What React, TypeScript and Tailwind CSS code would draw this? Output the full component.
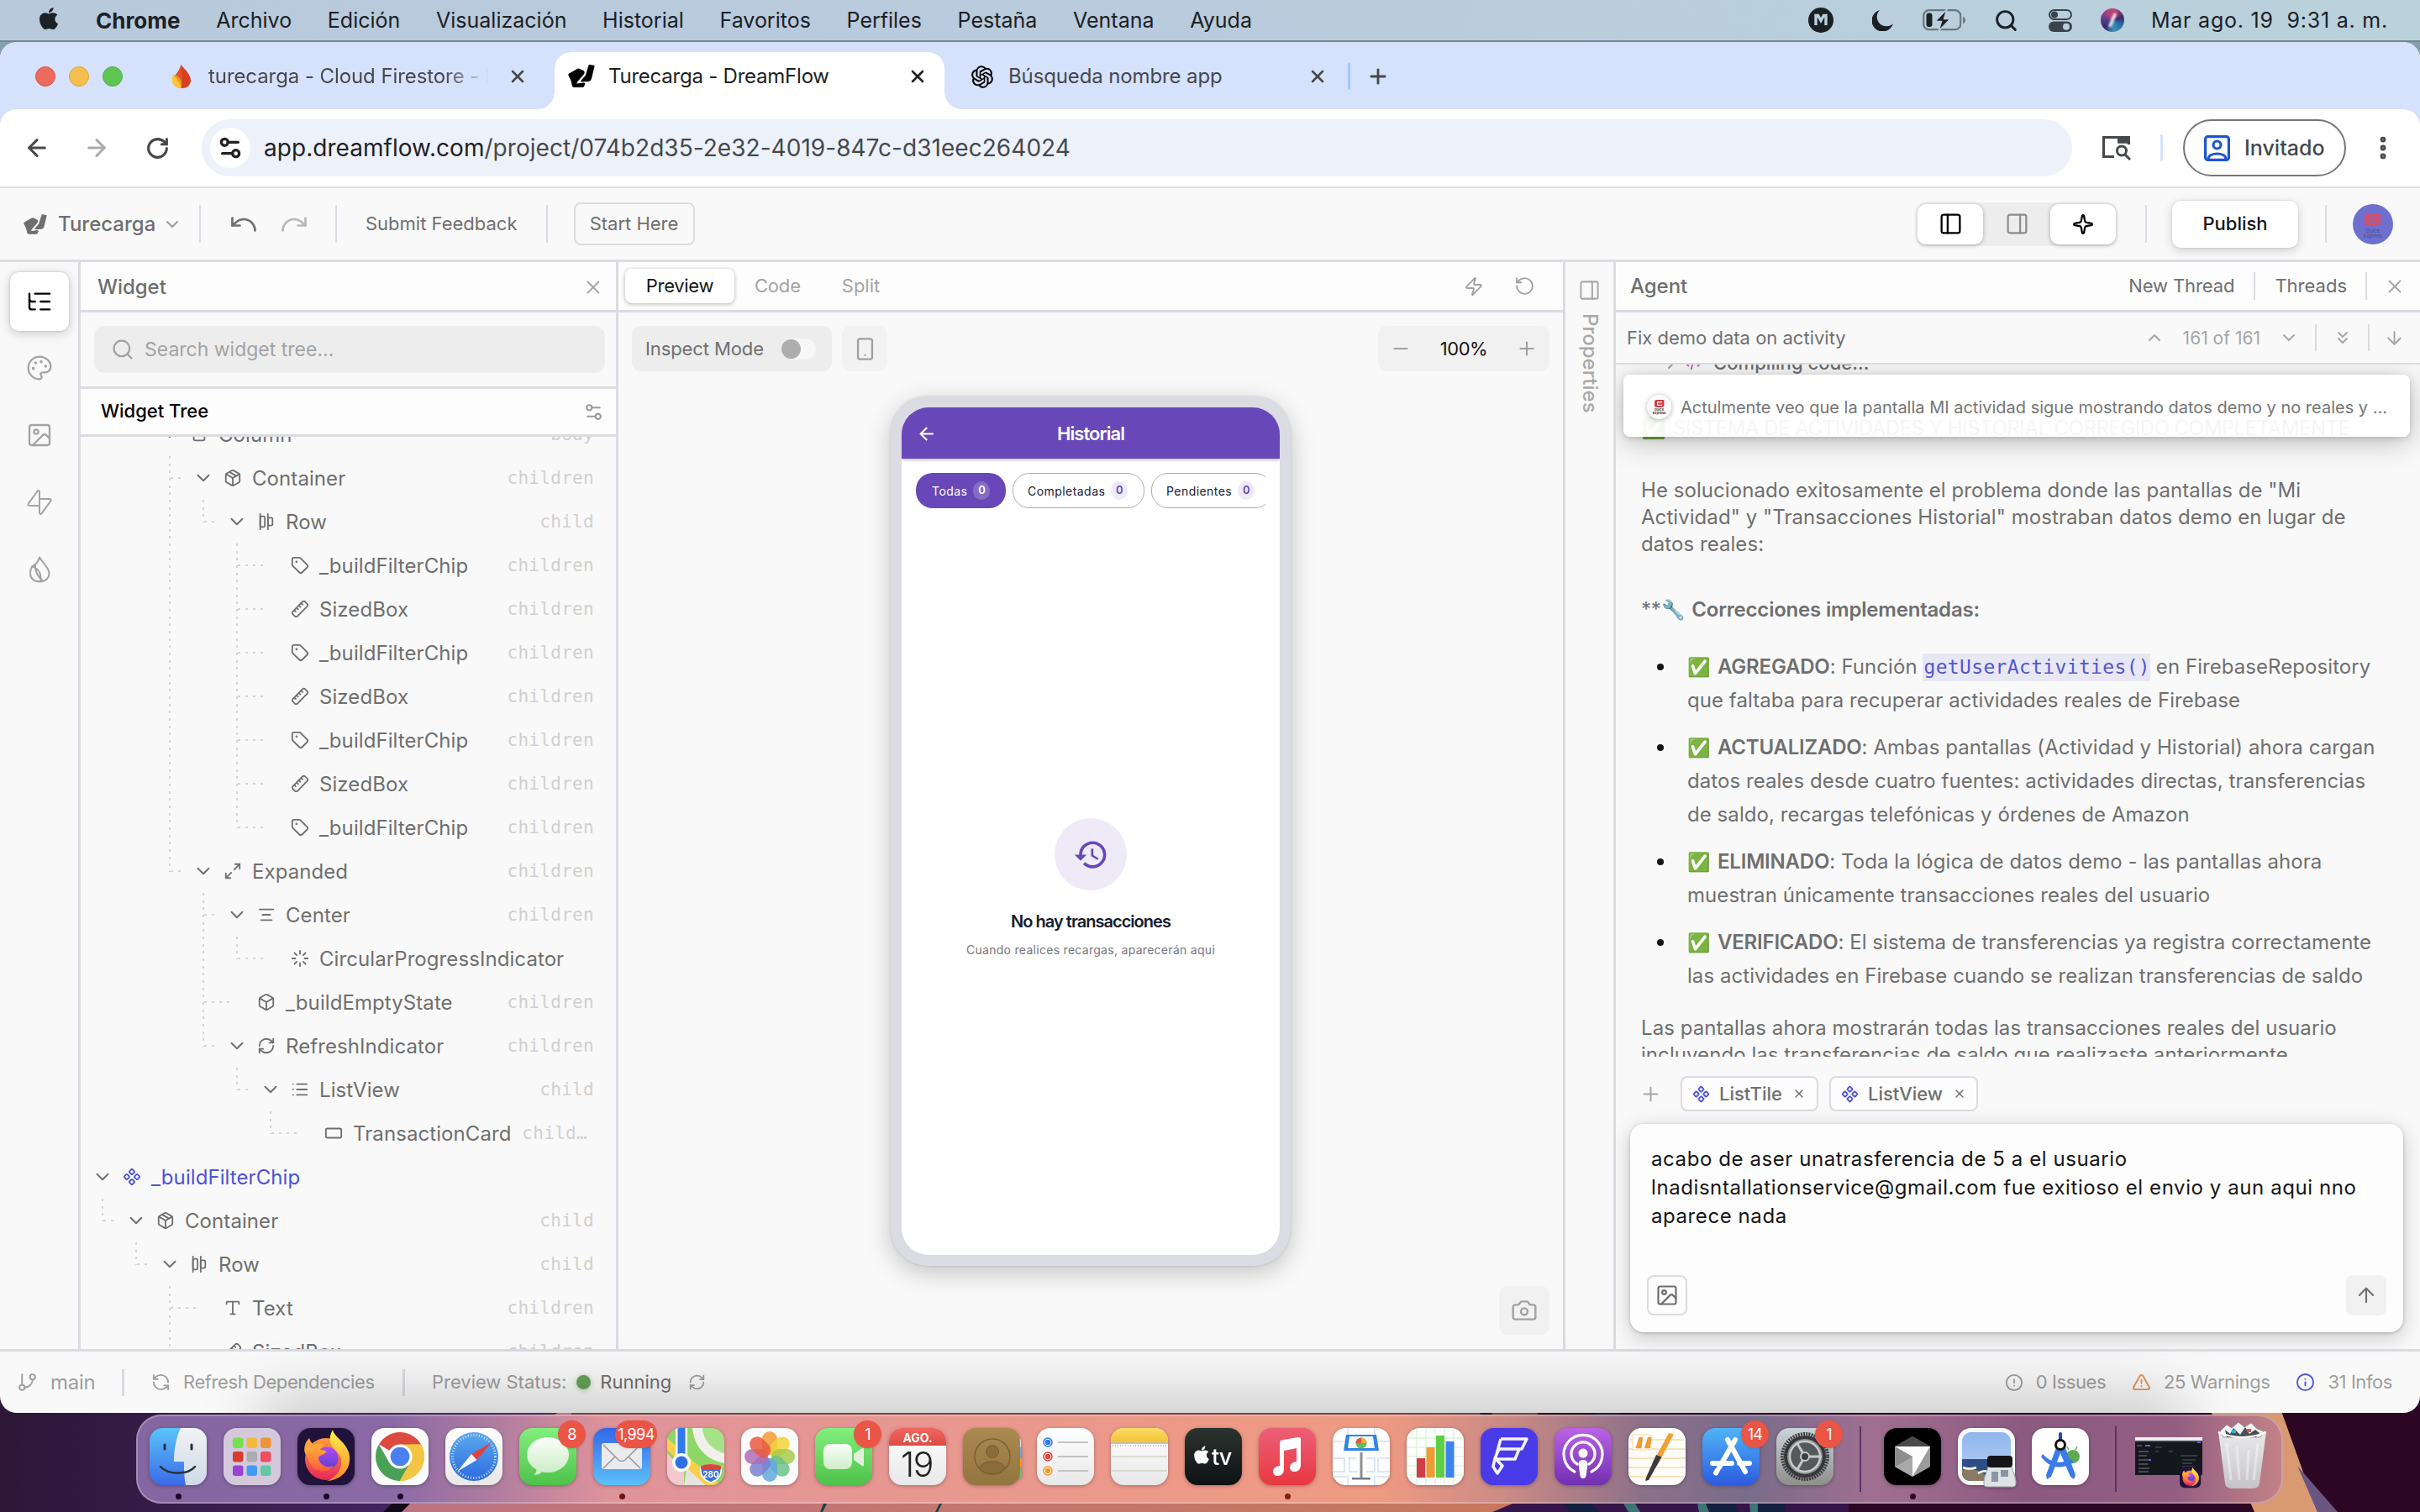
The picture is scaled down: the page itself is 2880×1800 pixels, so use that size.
import type { ReactNode } from 'react';
import {
  AlignCenter, AlignHorizontalDistributeStart, AlignVerticalDistributeStart, ArrowDown, ArrowLeft, ArrowRight, ArrowUp, Box, Camera,
  ChevronDown, ChevronRight, ChevronUp, ChevronsDown, CircleAlert, CodeXml, Component, EllipsisVertical, GitBranch, Image as ImageIcon,
  Info, List, ListTree, Loader, Maximize2, Minus, Package, Palette, PanelLeft, PanelRight, Plus, RectangleHorizontal, Redo, RefreshCcw,
  RefreshCw, RotateCcw, RotateCw, Ruler, Search, Settings2, Smartphone, Sparkle, Tag, TriangleAlert, Type, Undo, X, Zap,
} from 'lucide-react';
import { FaApple } from 'react-icons/fa';
import { AiOutlineOpenAI } from 'react-icons/ai';
import { MdArrowBack, MdHistory } from 'react-icons/md';

/* ---------- Menu bar ---------- */

const MENUS = ['Archivo', 'Edición', 'Visualización', 'Historial', 'Favoritos', 'Perfiles', 'Pestaña', 'Ventana', 'Ayuda'];

function MenuBar() {
  return (
    <header className="flex h-[48px] items-center bg-linear-to-r from-[#b9c9dc] via-[#b9cbdc] to-[#bad2dc] pl-[43px] pr-[38px] text-[25px] text-[#1b2126]">
      <FaApple className="mb-[4px] mr-[41px] size-[30px] shrink-0" />
      <nav className="flex items-center gap-[42.700px] pt-[1px]">
        <span className="text-[26px] font-bold">Chrome</span>
        {MENUS.map((m) => <span key={m}>{m}</span>)}
      </nav>
      <div className="ml-auto flex items-center">
        <svg className="size-[30px]" viewBox="0 0 30 30">
          <circle cx="15" cy="15" r="15" fill="#1b2024" />
          <path d="M9 21V9.500h2.600l3.400 6 3.400-6H21V21" fill="none" stroke="#bdd0dd" strokeWidth="3.400" />
        </svg>
        <svg className="ml-[46px] h-[26px] w-[26px]" viewBox="0 0 26 26">
          <path d="M9 1a11 11 0 0 0 16 16A13 13 0 1 1 9 1Z" fill="#1b2024" />
        </svg>
        <svg className="ml-[34px] h-[26px] w-[52px]" viewBox="0 0 52 26">
          <rect x="1.200" y="1.200" width="44" height="23" rx="6.500" fill="none" stroke="#6b7780" strokeWidth="2.200" />
          <rect x="4.500" y="4.500" width="7" height="16.500" rx="3" fill="#1b2024" />
          <path d="M48 9v8q3-1 3-4t-3-4" fill="#6b7780" />
          <path d="M29 0 15 14.500h7.500L19 26l14-14.500h-7.500z" fill="#1b2024" stroke="#bccedc" strokeWidth="1.500" />
        </svg>
        <Search className="ml-[33px] size-[29px]" strokeWidth={2.400} />
        <svg className="ml-[36px] h-[27px] w-[28px]" viewBox="0 0 28 27">
          <rect x="1" y="1" width="26" height="11" rx="5.500" fill="none" stroke="#3a4349" strokeWidth="2" />
          <circle cx="7" cy="6.500" r="4" fill="#3a4349" />
          <rect x="0" y="14.500" width="28" height="12.500" rx="6.200" fill="#3a4349" />
          <circle cx="21" cy="20.700" r="4" fill="#bccedc" />
        </svg>
        <span className="ml-[34px] flex size-[28px] items-center justify-center rounded-full bg-[conic-gradient(from_20deg,#b24a78,#3c2a66,#2b6fae,#3d8fb4,#312a70,#5a3f90,#b0427c,#b24a78)]">
          <span className="h-[18px] w-[4px] rotate-[25deg] rounded-full bg-white/80 blur-[1px]" />
        </span>
        <span className="ml-[32px] mt-[1px] whitespace-pre tracking-[0.780px]">Mar ago. 19  9:31 a. m.</span>
      </div>
    </header>
  );
}

/* ---------- Browser chrome ---------- */

function DreamLogo({ className }: { className: string }) {
  return (
    <svg className={className} viewBox="0 0 32 27" fill="currentColor">
      <path d="M24.500.600q.300-.700 1.200-.500l5 .700q1 .200.800 1.200L28 16.500q-.600 3-3.600 3.500l-7.400.500q-3 .100-1-2.200l4-4.600q1-1.200 1.400-2.700z" />
      <path d="M1.200 10.500 11 5q1.500-.800 3 0l4 1.800q2.200 1 1.500 3.200-.300 1.200-1.300 2.300L11.500 20q-1.200 1.500-1 2.500L19 21.500l1.500 1-1.200 3Q18.800 27 17 27H7q-1.700 0-2.100-1.700L3.500 19 .600 13q-.700-1.600.600-2.500Z" />
    </svg>
  );
}

function TabStrip() {
  return (
    <div className="flex h-[80px] bg-[#d6e1fb] text-[24px] text-[#45484d]">
      <div className="flex w-[660px] items-center pl-[42px] pt-[2px]">
        <div className="flex gap-4">
          <i className="size-[24px] rounded-full border border-[#d8564b] bg-[#ec6a5e]" />
          <i className="size-[24px] rounded-full border border-[#dba73f] bg-[#f4bf4f]" />
          <i className="size-[24px] rounded-full border border-[#50ad43] bg-[#61c554]" />
        </div>
        <svg className="ml-[56px] h-[28px] w-[28px]" viewBox="0 0 28 28">
          <path d="M13.500 0C17 5 25 11 25 18.500 25 25 20 28 15 28c-4 0-7-1.500-8.500-4.500z" fill="#d5401f" />
          <path d="M13.500 0C12 6 7 11 5 16l8 11 2-13z" fill="#e0522a" />
          <path d="M4 12c6 3 10 8 10 15.800C7 28 3 24 3 18.500 3 16 3.300 14 4 12Z" fill="#ffc43a" />
          <path d="M4.500 12c5 1 8.500 4 9.500 8v7.800C12 22 8.500 17 4.500 12Z" fill="#f59a1c" />
        </svg>
        <span className="ml-[18px] w-[334px] overflow-hidden whitespace-nowrap leading-[36px] tracking-[-0.080px] [mask-image:linear-gradient(to_right,#000_84%,transparent)]">turecarga - Cloud Firestore - Firebase</span>
        <X className="ml-[22px] size-[24px]" strokeWidth={2.600} />
      </div>
      <div className="relative mt-[12px] flex w-[464px] items-center rounded-t-[20px] bg-white pb-[11px] pl-[16px] text-[#1d1f22]">
        <span className="absolute bottom-0 left-[-20px] size-[20px] bg-[radial-gradient(circle_at_0_0,transparent_19.500px,white_20px)]" />
        <span className="absolute bottom-0 right-[-20px] size-[20px] bg-[radial-gradient(circle_at_100%_0,transparent_19.500px,white_20px)]" />
        <DreamLogo className="h-[27px] w-[32px] text-black" />
        <span className="ml-[16px] w-[356px] tracking-[-0.230px]">Turecarga - DreamFlow</span>
        <X className="size-[24px]" strokeWidth={2.600} />
      </div>
      <div className="flex items-center pl-[28px] pt-[1px]">
        <AiOutlineOpenAI className="size-[34px] text-black" />
        <span className="ml-[14px] w-[354px] tracking-[-0.120px]">Búsqueda nombre app</span>
        <X className="ml-[2px] size-[24px]" strokeWidth={2.600} />
        <i className="ml-[24px] h-[32px] w-[3px] rounded bg-[#a8c7fa]" />
        <Plus className="ml-[19px] size-[28px]" strokeWidth={2.400} />
      </div>
    </div>
  );
}

function AddressBar() {
  return (
    <div className="bg-[#d6e1fb]">
      <div className="flex h-[94px] items-center rounded-t-[20px] border-b-2 border-[#dedede] bg-white text-[#45484d]">
        <ArrowLeft className="ml-[28px] size-[32px]" strokeWidth={2.300} />
        <ArrowRight className="ml-[39px] size-[32px] text-[#a9abad]" strokeWidth={2.300} />
        <RotateCw className="ml-[42px] size-[29px]" strokeWidth={2.500} />
        <div className="ml-[38px] flex h-[68px] w-[2226px] items-center rounded-full bg-[#edf1f9] pl-[10px]">
          <span className="flex size-[48px] items-center justify-center rounded-full bg-white">
            <Settings2 className="size-[32px] text-[#222]" strokeWidth={2.500} />
          </span>
          <span className="ml-[16px] text-[28px] tracking-[0.040px] text-[#1f2124]">app.dreamflow.com<span className="text-[#45484d]">/project/074b2d35-2e32-4019-847c-d31eec264024</span></span>
        </div>
        <svg className="ml-[35px] h-[30px] w-[36px]" viewBox="0 0 36 30" fill="none" stroke="#45484d" strokeWidth="3">
          <path d="M15 25.500H2.500v-23h30V11M20 8h12" />
          <path d="M19 2.500h14v7H19z" fill="#45484d" stroke="none" />
          <circle cx="24" cy="18.500" r="5.500" />
          <path d="m28 23 6 6" />
        </svg>
        <i className="ml-[34px] h-[32px] w-[3px] rounded bg-[#d3e3fd]" />
        <div className="ml-[24px] flex h-[68px] w-[194px] items-center rounded-full border-2 border-[#747775] pl-[23px] pt-[2px] text-[25px] font-medium">
          <svg className="mb-[2px] mr-[17px] size-[31px]" viewBox="0 0 31 31" fill="none" stroke="#1f56d0" strokeWidth="3.200">
            <rect x="1.600" y="1.600" width="27.800" height="27.800" rx="3" />
            <circle cx="15.500" cy="11.500" r="4.500" />
            <path d="M5 28c1-8 20-8 21 0" />
          </svg>
          Invitado
        </div>
        <EllipsisVertical className="ml-[27px] size-[34px]" strokeWidth={2.800} />
      </div>
    </div>
  );
}

/* ---------- DreamFlow top bar ---------- */

function Divider({ className }: { className: string }) {
  return <i className={`h-[45px] w-[2px] shrink-0 bg-[#dadae2] ${className}`} />;
}

function AppBar() {
  return (
    <div className="flex h-[88px] items-center border-b-[3px] border-[#dbdbe3] text-[22px] text-[#6f6f6f]">
      <DreamLogo className="ml-[28px] h-[24px] w-[28px]" />
      <span className="ml-[13px] w-[117px] text-[24px] font-medium">Turecarga</span>
      <ChevronDown className="ml-[7px] size-[24px] text-[#9a9a9a]" strokeWidth={2} />
      <Divider className="ml-[20px]" />
      <Undo className="ml-[33px] size-[36px]" strokeWidth={1.800} />
      <Redo className="ml-[24px] size-[36px] text-[#b8b8b8]" strokeWidth={1.800} />
      <Divider className="ml-[31px]" />
      <span className="ml-[34px]">Submit Feedback</span>
      <Divider className="ml-[34px]" />
      <span className="ml-[31px] flex h-[51px] w-[144px] items-center justify-center rounded-[8px] border-2 border-[#dcdcdc]">Start Here</span>
      <div className="ml-auto flex h-[52px] items-center rounded-[10px] bg-[#ededed]">
        <span className="flex h-[48px] w-[78px] items-center justify-center rounded-[10px] bg-white text-black shadow-[0_1px_5px_rgba(0,0,0,.3)]"><PanelLeft className="size-[29px]" strokeWidth={1.900} /></span>
        <span className="flex w-[80px] items-center justify-center text-[#8b8b8b]"><PanelRight className="size-[29px]" strokeWidth={1.800} /></span>
        <span className="flex h-[48px] w-[78px] items-center justify-center rounded-[10px] bg-white text-black shadow-[0_1px_5px_rgba(0,0,0,.3)]"><Sparkle className="size-[26px]" strokeWidth={2.100} /></span>
      </div>
      <Divider className="ml-[35px]" />
      <span className="ml-[30px] flex h-[56px] w-[150px] items-center justify-center rounded-[10px] bg-white font-medium text-[#151515] shadow-[0_3px_12px_rgba(0,0,0,.18),0_0_2px_rgba(0,0,0,.15)]">Publish</span>
      <Divider className="ml-[32px]" />
      <span className="ml-[31px] mr-[32px] flex size-[48px] flex-col items-center justify-center rounded-full bg-[#6e70d0]">
        <svg className="mt-[4px] h-[15px] w-[20px]" viewBox="0 0 20 15"><path d="M0 4Q0 0 4 0h15v11q0 4-4 4H3q-3 0-3-4z" fill="#d2506a" /><path d="M15 4.500H6v6h9" fill="none" stroke="#8f63b6" strokeWidth="2" /></svg>
        <span className="mt-[3px] text-center text-[6px] leading-[6px] text-[#4b4a8c]">Dulce<br />Express</span>
      </span>
    </div>
  );
}

/* ---------- Widget tree ---------- */

function SupabaseMark() {
  return (
    <svg className="size-[32px]" viewBox="0 0 32 32" fill="none" stroke="currentColor" strokeWidth="2" strokeLinejoin="round">
      <path d="M16 20H4q-2.600-.300-1.200-2.600L13.600 2.600Q15.500 1 16 3.200z" />
      <path d="M16 12h12q2.600.300 1.200 2.600L18.400 29.400Q16.500 31 16 28.800z" />
    </svg>
  );
}

function FirebaseMark() {
  return (
    <svg className="h-[32px] w-[28px]" viewBox="0 0 28 32" fill="none" stroke="currentColor" strokeWidth="2" strokeLinejoin="round">
      <path d="M14 1.500C17 7 25.500 14 25.500 20.500c0 6-4.500 10-11.500 10-7 0-11-4.500-11-10 0-3 1-6.500 2-8C9 10.500 13 6 14 1.500Z" />
      <path d="M5 12.500c8 2 12 9 10 18M9 9.500c-1 8 2 14 9.500 20.500" />
    </svg>
  );
}

type IconType = typeof Tag;
type Row = { name: string; slot?: string; guides: string; icon: IconType; leaf?: boolean; accent?: boolean; flip?: boolean };

const chip = (end = false): Row => ({ name: '_buildFilterChip', slot: 'children', guides: end ? '  I L' : '  I T', icon: Tag, leaf: true });
const sized: Row = { name: 'SizedBox', slot: 'children', guides: '  I T', icon: Ruler, leaf: true, flip: true };

const ROWS: Row[] = [
  { name: 'Column', slot: 'body', guides: '  ', icon: AlignVerticalDistributeStart },
  { name: 'Container', slot: 'children', guides: '  T', icon: Package },
  { name: 'Row', slot: 'child', guides: '  IL', icon: AlignHorizontalDistributeStart },
  chip(), sized, chip(), sized, chip(), sized, chip(true),
  { name: 'Expanded', slot: 'children', guides: '  L', icon: Maximize2 },
  { name: 'Center', slot: 'children', guides: '   T', icon: AlignCenter },
  { name: 'CircularProgressIndicator', guides: '   IL', icon: Loader, leaf: true },
  { name: '_buildEmptyState', slot: 'children', guides: '   T', icon: Box, leaf: true },
  { name: 'RefreshIndicator', slot: 'children', guides: '   L', icon: RefreshCw },
  { name: 'ListView', slot: 'child', guides: '    L', icon: List },
  { name: 'TransactionCard', slot: 'child…', guides: '     L', icon: RectangleHorizontal, leaf: true },
  { name: '_buildFilterChip', guides: '', icon: Component, accent: true },
  { name: 'Container', slot: 'child', guides: 'L', icon: Package },
  { name: 'Row', slot: 'child', guides: ' L', icon: AlignHorizontalDistributeStart },
  { name: 'Text', slot: 'children', guides: '  T', icon: Type, leaf: true },
  { name: 'SizedBox', slot: 'children', guides: '  T', icon: Ruler, leaf: true, flip: true },
];

function Guide({ kind, leaf }: { kind: string; leaf?: boolean }) {
  return (
    <span className="flex h-[52px] w-[40px] shrink-0 pl-[19px]">
      {kind !== ' ' && <i className={`w-[2px] shrink-0 bg-[repeating-linear-gradient(to_bottom,#d4d4d4_0_3px,transparent_3px_8.670px)] ${kind === 'L' ? 'h-[27px]' : 'h-full'}`} />}
      {(kind === 'T' || kind === 'L') && <i className={`mt-[25px] h-[2px] shrink-0 bg-[repeating-linear-gradient(to_right,#d4d4d4_0_3px,transparent_3px_9px)] ${leaf ? 'w-[30px]' : 'w-[12px]'}`} />}
    </span>
  );
}

function TreeRow({ row }: { row: Row }) {
  const Icon = row.icon;
  return (
    <div className="flex h-[52px] shrink-0 items-center pl-[6px] pr-[26px] text-[#6f6f6f]">
      {[...row.guides].map((g, i) => <Guide key={i} kind={g} leaf={row.leaf} />)}
      <span className="flex w-[40px] shrink-0 justify-center">{!row.leaf && <ChevronDown className="size-[26px]" strokeWidth={1.800} />}</span>
      <Icon className={`ml-[4px] size-[22px] shrink-0 ${row.accent ? 'text-[#4d52d8]' : ''} ${row.flip ? '-scale-x-100' : ''}`} strokeWidth={2} />
      <span className={`ml-[12px] pt-[1px] text-[24px] tracking-[0.080px] ${row.accent ? 'text-[#4d52d8]' : ''}`}>{row.name}</span>
      <span className={`ml-auto pt-[1px] font-['DejaVu_Sans_Mono',monospace] text-[21px] tracking-[0.300px] text-[#d0d0d0] ${row.name === 'TransactionCard' ? 'pr-[8px]' : ''}`}>{row.slot}</span>
    </div>
  );
}

function Rail() {
  return (
    <div className="flex w-[96px] shrink-0 flex-col items-center border-r-[3px] border-[#dbdbe3] pt-[12px] text-[#a3a3a3]">
      <span className="flex h-[70px] w-[70px] items-center justify-center rounded-[10px] bg-white text-black shadow-[0_3px_14px_rgba(0,0,0,.18),0_0_3px_rgba(0,0,0,.2)]"><ListTree className="size-[32px]" strokeWidth={1.800} /></span>
      <div className="mt-[28px] flex flex-col items-center gap-[48px]">
        <Palette className="size-[32px]" strokeWidth={1.700} />
        <ImageIcon className="size-[32px]" strokeWidth={1.700} />
        <SupabaseMark />
        <FirebaseMark />
      </div>
    </div>
  );
}

function WidgetPanel() {
  return (
    <section className="flex w-[640px] shrink-0 flex-col border-r-[3px] border-[#dbdbe3]">
      <div className="flex h-[60px] shrink-0 items-center justify-between border-b-[3px] border-[#dbdbe3] bg-[#fdfdfd] pl-[20px] pr-[14px] pt-[2px]">
        <span className="text-[24px] font-medium tracking-[-0.050px] text-[#6f6f6f]">Widget</span>
        <X className="size-[26px] text-[#a5a5a5]" strokeWidth={1.700} />
      </div>
      <div className="h-[91px] shrink-0 border-b-[3px] border-[#dbdbe3] px-[16px] pt-[16px]">
        <div className="flex h-[56px] w-[608px] items-center rounded-[12px] bg-[#ededed] pl-[20px] text-[23px] text-[#a3a3a3]">
          <Search className="mr-[12px] size-[28px]" strokeWidth={2} />
          <span className="pt-[1px]">Search widget tree...</span>
        </div>
      </div>
      <div className="flex h-[57px] shrink-0 items-center justify-between border-b-[3px] border-[#dbdbe3] bg-[#fdfdfd] pl-[24px] pr-[14px]">
        <span className="pb-[1px] text-[22px] font-medium text-black">Widget Tree</span>
        <Settings2 className="size-[25px] text-[#9a9a9a]" strokeWidth={2} />
      </div>
      <div className="min-h-0 flex-1 overflow-hidden">
        <div className="mt-[-29px] flex flex-col">
          {ROWS.map((r, i) => <TreeRow key={i} row={r} />)}
        </div>
      </div>
    </section>
  );
}

/* ---------- Preview ---------- */

function Chip({ label, active, className }: { label: string; active?: boolean; className: string }) {
  return (
    <span className={`flex h-[42px] shrink-0 items-center rounded-[20px] text-[14px] tracking-[0.450px] ${active ? 'bg-[#6848b8] pl-[19px] text-white' : 'border border-[#adadad] pl-[17px] text-[#201c30]'} ${className}`}>
      {label}
      <b className={`ml-[7px] flex h-[22px] w-[20px] items-center justify-center rounded-[10px] text-[13px] font-semibold tracking-normal ${active ? 'bg-white/20' : 'bg-[#eeeaf7] text-[#6848b8]'}`}>0</b>
    </span>
  );
}

function Phone() {
  return (
    <div className="flex h-[1035px] w-[476px] rounded-[44px] bg-[#dbdbe3] p-[13px] shadow-[0_8px_30px_rgba(0,0,0,.22),0_0_3px_rgba(0,0,0,.15)]">
      <div className="flex w-full flex-col overflow-hidden rounded-[32px] bg-white">
        <div className="relative z-10 flex h-[61px] shrink-0 items-center justify-center bg-[#6848b8] pt-[1px] text-[22px] font-semibold tracking-[-0.900px] text-white shadow-[0_1px_4px_rgba(0,0,0,.35)]">
          <MdArrowBack className="absolute left-[17px] size-[25px]" />
          Historial
        </div>
        <div className="ml-[17px] mr-[17px] mt-[17px] flex gap-[8px] overflow-hidden">
          <Chip label="Todas" active className="w-[107px]" />
          <Chip label="Completadas" className="w-[157px]" />
          <Chip label="Pendientes" className="w-[144px]" />
        </div>
        <div className="mt-[369px] flex flex-col items-center">
          <span className="flex size-[86px] items-center justify-center rounded-full bg-[#eeeaf7]"><MdHistory className="size-[43px] text-[#6848b8]" /></span>
          <span className="mt-[25px] text-[20px] font-semibold leading-[24px] tracking-[-0.980px] text-[#151c2c]">No hay transacciones</span>
          <span className="mt-[12px] text-[14px] leading-[20px] tracking-[0.290px] text-[#76767e]">Cuando realices recargas, aparecerán aqui</span>
        </div>
      </div>
    </div>
  );
}

function PreviewPanel() {
  return (
    <section className="flex w-[1127px] shrink-0 flex-col border-r-[3px] border-[#dbdbe3]">
      <div className="flex h-[60px] shrink-0 items-center border-b-[3px] border-[#dbdbe3] bg-[#fdfdfd] pl-[8px] text-[22px] text-[#a3a3a3]">
        <span className="flex h-[41px] w-[130px] items-center justify-center rounded-[8px] bg-white tracking-[-0.300px] text-[#151515] shadow-[0_1px_5px_rgba(0,0,0,.3)]">Preview</span>
        <span className="ml-[24px] tracking-[-0.200px]">Code</span>
        <span className="ml-[49px]">Split</span>
        <Zap className="ml-auto size-[24px]" strokeWidth={1.900} />
        <RotateCcw className="ml-[36px] mr-[33px] size-[25px]" strokeWidth={1.900} />
      </div>
      <div className="flex h-[70px] shrink-0 items-end pl-[16px] pr-[16px] text-[22px] text-[#6f6f6f]">
        <div className="flex h-[54px] w-[238px] items-center rounded-[10px] bg-[#ededed] pl-[16px] tracking-[-0.100px]">
          Inspect Mode
          <span className="ml-[21px] flex h-[25px] w-[41px] items-center rounded-full bg-[#f7f7f7]"><i className="size-[23px] rounded-full bg-[#adadad]" /></span>
        </div>
        <span className="ml-[12px] flex h-[54px] w-[54px] items-center justify-center rounded-[10px] bg-[#f2f2f2]"><Smartphone className="size-[29px] text-[#a0a0a0]" strokeWidth={1.900} /></span>
        <div className="ml-auto flex h-[54px] w-[204px] items-center justify-between rounded-[10px] bg-[#f1f1f1] px-[14px] text-[#a0a0a0]">
          <Minus className="size-[26px]" strokeWidth={1.900} />
          <span className="text-[22px] tracking-[-0.500px] text-[#151515]">100%</span>
          <Plus className="size-[26px]" strokeWidth={1.900} />
        </div>
      </div>
      <div className="flex justify-center pt-[30px]"><Phone /></div>
      <div className="flex justify-end pr-[16px] pt-[24px]">
        <span className="flex h-[58px] w-[60px] items-center justify-center rounded-[10px] bg-[#f1f1f1]"><Camera className="size-[32px] text-[#a0a0a0]" strokeWidth={1.800} /></span>
      </div>
    </section>
  );
}

/* ---------- Agent ---------- */

function Bullet({ title, children }: { title: string; children: ReactNode }) {
  return (
    <li className="flex">
      <i className="ml-[19px] mr-[28px] mt-[16px] size-[8px] shrink-0 rounded-full bg-[#151515]" />
      <p className="whitespace-nowrap leading-[40px]"><span className="mr-[7px] inline-block w-[29px] text-[22px] leading-[30px]">✅</span><b className="font-semibold tracking-[-0.200px]">{title}</b>: {children}</p>
    </li>
  );
}

function ContextChip({ label, className }: { label: string; className: string }) {
  return (
    <span className={`flex h-[42px] items-center rounded-[8px] border-2 border-[#dbdbe3] bg-[#fdfdfd] pl-[12px] font-medium text-[#6f6f6f] ${className}`}>
      <Component className="mr-[11px] size-[21px] text-[#5156d8]" strokeWidth={2.200} />
      {label}
      <X className="ml-[12px] size-[16px]" strokeWidth={2.200} />
    </span>
  );
}

function AgentPanel() {
  return (
    <section className="flex min-w-0 flex-1 flex-col text-[22px] text-[#6f6f6f]">
      <div className="flex h-[60px] shrink-0 items-center border-b-[3px] border-[#dbdbe3] bg-[#fdfdfd] pl-[17px] pr-[17px]">
        <span className="text-[24px] font-medium tracking-[-0.050px]">Agent</span>
        <span className="ml-auto tracking-[-0.100px]">New Thread</span>
        <i className="ml-[23px] mr-[23px] h-[33px] w-[2px] bg-[#dadae2]" />
        <span>Threads</span>
        <i className="ml-[22px] mr-[20px] h-[33px] w-[2px] bg-[#dadae2]" />
        <X className="size-[26px] text-[#a5a5a5]" strokeWidth={1.700} />
      </div>
      <div className="flex h-[62px] shrink-0 items-center border-b-2 border-[#dbdbe3] pl-[13px] pr-[18px] text-[#a5a5a5]">
        <span className="text-[#6f6f6f]">Fix demo data on activity</span>
        <ChevronUp className="ml-auto size-[24px]" strokeWidth={2} />
        <span className="ml-[22px] pt-[2px] text-[21px]">161 of 161</span>
        <ChevronDown className="ml-[22px] size-[24px]" strokeWidth={2} />
        <i className="ml-[19px] mr-[19px] h-[32px] w-[2px] bg-[#dadae2]" />
        <ChevronsDown className="size-[24px]" strokeWidth={1.800} />
        <i className="ml-[18px] mr-[17px] h-[32px] w-[2px] bg-[#dadae2]" />
        <ArrowDown className="size-[25px]" strokeWidth={1.900} />
      </div>
      <div className="relative h-[824px] shrink-0 overflow-hidden text-[24px] tracking-[0.060px]">
        <div className="mt-[-18px] flex flex-col pl-[30px] leading-[32px]">
          <div className="flex items-center pl-[24px] text-[22px] font-medium">
            <ChevronRight className="size-[24px] text-[#9a9a9a]" strokeWidth={2} />
            <CodeXml className="ml-[3px] mr-[13px] size-[22px] text-[#c05ab4]" strokeWidth={2} />
            Compiling code...
          </div>
          <div className="mt-[46px] h-[32px] whitespace-nowrap"><span className="inline-block w-[38px]">✅</span><span className="tracking-[-0.480px]">SISTEMA DE ACTIVIDADES Y HISTORIAL CORREGIDO COMPLETAMENTE</span></div>
          <p className="mt-[42px]">
            He solucionado exitosamente el problema donde las pantallas de "Mi<br />
            Actividad" y "Transacciones Historial" mostraban datos demo en lugar de<br />
            datos reales:
          </p>
          <p className="mt-[46px] h-[32px] font-semibold tracking-[-0.200px]"><span className="font-normal">**</span><span className="mr-[2px] text-[23px]">🔧</span> Correcciones implementadas:</p>
          <ul className="mt-[32px] flex flex-col gap-4">
            <Bullet title="AGREGADO">Función <code className="inline-block bg-[#e8e7f4] pl-[1px] font-['DejaVu_Sans_Mono',monospace] text-[23px] leading-[33px] tracking-[0.340px] text-[#5257d0]">getUserActivities()</code> en FirebaseRepository<br />que faltaba para recuperar actividades reales de Firebase</Bullet>
            <Bullet title="ACTUALIZADO">Ambas pantallas (Actividad y Historial) ahora cargan<br />datos reales desde cuatro fuentes: actividades directas, transferencias<br />de saldo, recargas telefónicas y órdenes de Amazon</Bullet>
            <Bullet title="ELIMINADO">Toda la lógica de datos demo - las pantallas ahora<br />muestran únicamente transacciones reales del usuario</Bullet>
            <Bullet title="VERIFICADO">El sistema de transferencias ya registra correctamente<br />las actividades en Firebase cuando se realizan transferencias de saldo</Bullet>
          </ul>
          <p className="mt-[26px]">
            Las pantallas ahora mostrarán todas las transacciones reales del usuario<br />
            incluyendo las transferencias de saldo que realizaste anteriormente
          </p>
        </div>
        <div className="absolute left-[9px] top-[12px] flex h-[74px] w-[936px] items-center rounded-[8px] bg-white/93 pl-[28px] pt-[3px] text-[20px] tracking-normal text-[#757575] shadow-[0_6px_34px_rgba(0,0,0,.25),0_2px_6px_rgba(0,0,0,.15)]">
          <span className="mr-[11px] flex size-[29px] shrink-0 flex-col items-center justify-center rounded-full bg-[#fbfbfb] shadow-[0_1px_6px_rgba(0,0,0,.3)]">
            <svg className="h-[9px] w-[12px]" viewBox="0 0 20 15"><path d="M0 4Q0 0 4 0h15v11q0 4-4 4H3q-3 0-3-4z" fill="#d23c44" /><path d="M15 4.500H6v6h9" fill="none" stroke="#fff" strokeWidth="2" /></svg>
            <span className="mt-[1px] text-center text-[4px] font-bold leading-[4px] text-[#444]">Dulce<br />Express</span>
          </span>
          <span className="whitespace-nowrap">Actulmente veo que la pantalla MI actividad sigue mostrando datos demo y no reales y ...</span>
        </div>
      </div>
      <div className="mt-[23px] flex shrink-0 items-center pl-[28px]">
        <Plus className="mr-[22px] size-[27px] text-[#a5a5a5]" strokeWidth={1.800} />
        <ContextChip label="ListTile" className="w-[164px]" />
        <ContextChip label="ListView" className="ml-[13px] w-[177px]" />
      </div>
      <div className="ml-[17px] mt-[15px] flex h-[248px] w-[920px] shrink-0 flex-col rounded-[16px] bg-[#fdfdfd] shadow-[0_6px_24px_rgba(0,0,0,.2),0_1px_4px_rgba(0,0,0,.2)]">
        <p className="ml-[25px] mt-[25px] whitespace-nowrap text-[24px] leading-[34px] tracking-[0.580px] text-[#151515]">
          acabo de aser unatrasferencia de 5 a el usuario<br />
          lnadisntallationservice@gmail.com fue exitioso el envio y aun aqui nno<br />
          aparece nada
        </p>
        <div className="mb-[20px] mt-auto flex justify-between px-[20px]">
          <span className="flex size-[48px] items-center justify-center rounded-[8px] border-2 border-[#dcdcdc]"><ImageIcon className="size-[28px]" strokeWidth={1.900} /></span>
          <span className="flex size-[48px] items-center justify-center rounded-[8px] bg-[#f1f1f1]"><ArrowUp className="size-[28px]" strokeWidth={1.800} /></span>
        </div>
      </div>
    </section>
  );
}

/* ---------- Status bar ---------- */

function StatusBar() {
  return (
    <div className="relative flex h-[76px] shrink-0 items-center border-t-[3px] border-[#dbdbe3] pl-[20px] pr-[33px] text-[22px] tracking-[-0.420px] text-[#9e9e9e]">
      <div className="absolute bottom-[-40px] left-[330px] right-[300px] h-[38px] shadow-[0_0_76px_18px_rgba(0,0,0,.22)]" />
      <GitBranch className="size-[25px]" strokeWidth={1.900} />
      <span className="ml-[15px] w-[54px] text-[24px] tracking-[-0.300px]">main</span>
      <i className="ml-[31px] h-[32px] w-[3px] bg-[#dbdbe3]" />
      <RefreshCcw className="ml-[32px] size-[23px]" strokeWidth={2} />
      <span className="ml-[15px] w-[228px] whitespace-nowrap">Refresh Dependencies</span>
      <i className="ml-[33px] h-[32px] w-[3px] bg-[#dbdbe3]" />
      <span className="ml-[32px] tracking-[-0.020px]">Preview Status:</span>
      <i className="ml-[12px] size-[17px] rounded-full bg-[#66a057] shadow-[0_1px_6px_rgba(90,170,80,.5)]" />
      <span className="ml-[11px] tracking-normal text-[#6f6f6f]">Running</span>
      <RefreshCw className="ml-[20px] size-[21px]" strokeWidth={2} />
      <CircleAlert className="ml-auto size-[22px]" strokeWidth={2} />
      <span className="ml-[15px]">0 Issues</span>
      <TriangleAlert className="ml-[31px] size-[23px] text-[#e19457]" strokeWidth={2} />
      <span className="ml-[15px]">25 Warnings</span>
      <Info className="ml-[31px] size-[23px] text-[#5257d8]" strokeWidth={2} />
      <span className="ml-[15px]">31 Infos</span>
    </div>
  );
}

/* ---------- Dock ---------- */

function Tile({ children, badge, dot, wide }: { children: ReactNode; badge?: string; dot?: string; wide?: boolean }) {
  return (
    <div className="relative flex h-[106px] w-[68px] shrink-0 flex-col items-center pt-[16px]">
      <svg className="size-[68px] overflow-visible drop-shadow-[0_1px_2px_rgba(0,0,0,.3)]" viewBox="0 0 68 68">{children}</svg>
      {dot && <i className={`mt-[10px] size-[7px] rounded-full ${dot}`} />}
      {badge && <b className={`absolute top-[7px] flex h-[33px] items-center justify-center rounded-full bg-[#ea5545] text-[18px] font-normal tracking-[-0.600px] text-white shadow ${wide ? 'left-[26px] w-[50px]' : 'left-[46px] w-[33px]'}`}>{badge}</b>}
    </div>
  );
}

function Plate({ fill }: { fill: string }) {
  return <rect width="68" height="68" rx="15.500" fill={fill} />;
}

function FirefoxArt() {
  return (
    <>
      <circle cx="34" cy="37" r="25" fill="url(#ffBody)" />
      <path d="M42 2c1 8 15 14 19 27 5 16-6 33-26 34 14-5 20-18 16-29C47 25 32 20 42 2Z" fill="url(#ffFlame)" />
      <path d="M9 30c-2-6 0-13 5-18 1 3 3 6 5 8 4-2 9-2 13 0-3 2-5 5-5 8-8 3-13 3-18 2Z" fill="#ffa53a" />
      <circle cx="35" cy="36" r="13.500" fill="url(#ffGlobe)" />
      <path d="M9 30c8-6 18-6 26-2-3 4-8 4-10 7 0 8 10 14 18 10-6 9-22 8-27-1-2-4-4-8-7-14Z" fill="url(#ffTail)" />
    </>
  );
}

const PETALS = ['#f29a34', '#f0d33c', '#a8c94c', '#6cc28b', '#62a9dd', '#7c7fd0', '#b06cb4', '#e9593f'];

function Grad({ id, a, b }: { id: string; a: string; b: string }) {
  return <linearGradient id={id} x1="0" y1="0" x2="0" y2="1"><stop stopColor={a} /><stop offset="1" stopColor={b} /></linearGradient>;
}

function Defs() {
  return (
    <svg className="absolute size-0">
      <defs>
        <Grad id="finder" a="#5bc4fa" b="#3a6ae8" /><Grad id="finderR" a="#f2f2f5" b="#cfd9e6" /><Grad id="green" a="#82ef7e" b="#4fc24a" />
        <Grad id="mail" a="#3467e8" b="#5cc0fb" /><Grad id="paper" a="#ffffff" b="#e8e8e8" /><Grad id="tan" a="#ab8a50" b="#94743f" /><Grad id="dark" a="#2b3430" b="#0d1112" />
        <Grad id="music" a="#ec5f76" b="#e83842" /><Grad id="pod" a="#bb63e6" b="#7030b0" /><Grad id="store" a="#50b4f5" b="#2b5be0" /><Grad id="gray" a="#c9d4da" b="#8f8f8b" />
        <Grad id="needle" a="#5aa9ee" b="#2d6be0" /><Grad id="ffBody" a="#ff9a3a" b="#e6285c" /><Grad id="ffFlame" a="#fff04a" b="#ff8a2c" /><Grad id="ffGlobe" a="#b04cf0" b="#5a3fd0" />
        <Grad id="ffTail" a="#ffa53a" b="#ff5a3c" /><Grad id="notes" a="#fbdc68" b="#f4c431" /><Grad id="cal" a="#f0675f" b="#dd4b45" /><Grad id="bin" a="#e9e9ea" b="#c5c3c6" /><Grad id="sky" a="#8fb6ec" b="#b7d2f4" />
        <Grad id="bubble" a="#fbfdfb" b="#cdeec6" />
      </defs>
    </svg>
  );
}

const LAUNCH = ['#74e04e', '#f4b93c', '#ee9434', '#d63a30', '#a9acb0', '#ee4d60', '#9a44d4', '#3f9df5', '#62c9a4'];

function Dock() {
  return (
    <div className="relative ml-[162px] mt-[2px] flex h-[106px] w-[2555px] rounded-[30px] bg-[linear-gradient(to_right,#8466a0_0,#8b6aa6_12%,#b27e9f_17%,#df939b_22%,#e9988f_38%,#ef9a82_58%,#c98a86_64%,#8e7189_70%,#796c8b_75%,#a06f90_81%,#8c5a80_88%,#935e82_95%,#c38286_100%)] pl-[16px] shadow-[inset_0_0_0_2px_rgba(255,255,255,.25)]">
      <div className="flex gap-[20px]">
        <Tile dot="bg-[#1a0528]">
          <Plate fill="url(#finder)" />
          <path d="M37 0h15.500A15.500 15.500 0 0 1 68 15.500v37A15.500 15.500 0 0 1 52.500 68H43c-2-9-2-18-2-28H29C29 25 32 10 37 0Z" fill="url(#finderR)" />
          <path d="M18 20v5M50 20v5" stroke="#26303c" strokeWidth="3" strokeLinecap="round" />
          <path d="M13 46c9 10 33 10 41 0" fill="none" stroke="#26303c" strokeWidth="2.500" strokeLinecap="round" />
        </Tile>
        <Tile>
          <Plate fill="#d4c9dc" />
          {LAUNCH.map((c, i) => <rect key={i} x={11 + (i % 3) * 16.5} y={11.5 + Math.floor(i / 3) * 16.5} width="12.500" height="12.500" rx="3" fill={c} />)}
        </Tile>
        <Tile dot="bg-[#1a0528]"><Plate fill="#20123a" /><FirefoxArt /></Tile>
        <Tile dot="bg-[#1a0528]">
          <Plate fill="#fbfbfb" />
          <g transform="translate(34 34)">
            <path d="M0 0 -25.100-14.500A29 29 0 0 1 25.100-14.500Z" fill="#dd4b3e" />
            <path d="M-25.100-14.500A29 29 0 0 0 0 29L12.500 7.500-12.500 7.500Z" fill="#4ba058" />
            <path d="M25.100-14.500A29 29 0 0 1 0 29L13 6.500V-14.500Z" fill="#f4c443" />
            <path d="M0-14.500h25.100A29 29 0 0 1 0 29L12.500 7Z" fill="#f4c443" />
            <circle r="14.500" fill="#fff" /><circle r="11.300" fill="#4a80ee" />
          </g>
        </Tile>
        <Tile>
          <Plate fill="url(#paper)" />
          <circle cx="34" cy="34" r="29" fill="url(#needle)" />
          <circle cx="34" cy="34" r="25.500" fill="none" stroke="#cfe4fb" strokeWidth="3" strokeDasharray="1 2.300" />
          <path d="M55 17 37.500 38 31 31Z" fill="#e0403c" /><path d="M14 52 31 31l6.500 7Z" fill="#f2f4f6" />
        </Tile>
        <Tile badge="8">
          <Plate fill="url(#green)" />
          <path d="M20 47c1 4 0 7-3 9 6 0 10-3 12-6" fill="#cdeec6" /><ellipse cx="34" cy="32" rx="25" ry="21" fill="url(#bubble)" />
        </Tile>
        <Tile badge="1,994" wide dot="bg-[#6f1414]">
          <Plate fill="url(#mail)" />
          <rect x="10" y="18" width="48" height="31" rx="3" fill="#ebebee" />
          <path d="m12 20 18 18q4 3 8 0l18-18M12 48l14-14m30 14L42 34" fill="none" stroke="#98989c" strokeWidth="1.500" />
        </Tile>
        <Tile>
          <clipPath id="mapClip"><rect width="68" height="68" rx="15.500" /></clipPath>
          <g clipPath="url(#mapClip)">
            <rect width="68" height="68" fill="#8ed767" />
            <path d="M0 30l20 22v16H0z" fill="#f3c9d0" />
            <path d="M24 44 50 68H20z" fill="#e6e4de" />
            <path d="M30 0h12c2 16 12 26 26 30v12C46 38 32 22 30 0Z" fill="#f2f0ea" />
            <path d="M42 0h26v30C54 26 44 16 42 0Z" fill="#a6e287" />
            <path d="M0 12 68 72H50L0 26Z" fill="#f8d04c" />
            <path d="M10 0h14v34H10z" fill="#fff" /><path d="M12.500 0h9v40h-9z" fill="#2f79e8" />
            <circle cx="17" cy="41" r="11" fill="#fff" /><circle cx="17" cy="41" r="7.500" fill="#2f6fe6" />
          </g>
          <path d="M40 46q12-4 24 0 2 14-12 19Q38 60 40 46Z" fill="#3b74d8" stroke="#fff" strokeWidth="1.500" /><path d="M40 49v-4q12-4 24 0v4z" fill="#d9473c" />
          <text x="52" y="59" fontSize="10" fontWeight="700" fill="#fff" textAnchor="middle">280</text>
        </Tile>
        <Tile>
          <Plate fill="#fbfbfb" />
          {PETALS.map((c, i) => <rect key={c} x="25" y="4" width="18" height="28" rx="9" fill={c} opacity=".85" transform={`rotate(${i * 45} 34 34)`} />)}
        </Tile>
        <Tile badge="1">
          <Plate fill="url(#green)" />
          <rect x="10" y="19" width="34" height="30" rx="8" fill="url(#bubble)" /><path d="m46 31 10-7q2-1 2 1v19q0 2-2 1l-10-7z" fill="#e0f2dc" />
        </Tile>
        <Tile>
          <Plate fill="url(#paper)" />
          <path d="M0 21v-5.500A15.500 15.500 0 0 1 15.500 0h37A15.500 15.500 0 0 1 68 15.500V21z" fill="url(#cal)" />
          <text x="34" y="16.500" fontSize="14" fontWeight="700" fill="#fff" textAnchor="middle">AGO.</text>
          <text x="33" y="58" fontSize="41" fontWeight="300" fill="#222" textAnchor="middle" letterSpacing="-1.500">19</text>
        </Tile>
        <Tile>
          <path d="M60 12h6q3 0 3 3v8h-6z" fill="#dedede" /><path d="M60 23h10v12H60z" fill="#58a8e0" /><path d="M60 36h10v11H60z" fill="#ef9534" /><path d="M60 48h10v8q0 4-5 4h-5z" fill="#5fc85a" />
          <Plate fill="url(#tan)" />
          <circle cx="35" cy="34" r="21" fill="none" stroke="#7b6034" strokeWidth="1.500" /><circle cx="35" cy="28" r="7.500" fill="#8a6c3b" stroke="#765b30" /><path d="M20 48c3-11 27-11 30 0-7 9-23 9-30 0Z" fill="#8a6c3b" stroke="#765b30" />
        </Tile>
        <Tile>
          <Plate fill="url(#paper)" />
          {['#2f78ee', '#e5483f', '#ee9a2e'].map((c, i) => (
            <g key={c}><circle cx="13" cy={17 + i * 17} r="5" fill="#fff" stroke={c} strokeWidth="1.500" /><circle cx="13" cy={17 + i * 17} r="3.300" fill={c} /><path d={`M25 ${17 + i * 17}h36`} stroke="#c3c3c6" strokeWidth="1.800" /></g>
          ))}
        </Tile>
        <Tile>
          <Plate fill="url(#paper)" />
          <path d="M0 17v-1.500A15.500 15.500 0 0 1 15.500 0h37A15.500 15.500 0 0 1 68 15.500V17z" fill="url(#notes)" />
          <path d="M0 18h68" stroke="#8f8a78" strokeWidth="1.200" /><path d="M2 21h64" stroke="#b5b5b5" strokeWidth="1.500" strokeDasharray="1 2" /><path d="M1 34h66M1 51h66" stroke="#d3d2cc" strokeWidth="1.500" />
        </Tile>
        <Tile>
          <Plate fill="url(#dark)" />
          <g transform="translate(8 20)"><FaApple size={24} color="#fff" /></g>
          <text x="32" y="44" fontSize="27" fontWeight="500" fill="#fff" letterSpacing="-1">tv</text>
        </Tile>
        <Tile dot="bg-[#7b1f10]">
          <Plate fill="url(#music)" />
          <path d="M25 18q0-3 3-3.700L47 11q3-.500 3 2v31q0 7-7 8-6 0-6-5 0-6 8-7V24l-15 3v22q0 7-7 8-6 0-6-5 0-6 8-7z" fill="#fff" />
        </Tile>
        <Tile>
          <Plate fill="#fdfdfd" />
          <path d="M0 16h16M52 16h16M18 36h10M0 36h14v16H0M20 36v16h10M54 36h14M54 36v16h14M40 36h10v16H40M18 0v12M50 0v8M18 56v12M50 56v12M0 58h16M52 58h16" fill="none" stroke="#d0dff2" strokeWidth="1.500" />
          <path d="M16 8h36l3 19H13z" fill="#2f84e8" /><path d="M20 10h28l2 14H18z" fill="#f7fafd" /><circle cx="34" cy="18" r="6.500" fill="#5bbf52" /><path d="M34 18V11.500a6.500 6.500 0 0 1 6.500 6.500z" fill="#f2b233" /><path d="M34 18v-6.500a6.500 6.500 0 0 0-6.500 6.500z" fill="#e2564a" />
          <path d="M32.500 29h3v30h-3z" fill="#8b9198" /><path d="M23 59h22v2.500H23z" fill="#777d84" />
        </Tile>
        <Tile>
          <Plate fill="#fcfefb" />
          <path d="M0 12h68M0 23h68M0 34h68M0 45h68M0 56h68M12 0v68M23 0v68M34 0v68M45 0v68M56 0v68" stroke="#d3efcf" strokeWidth="1" />
          <path d="M12 36h10v23H12z" fill="#d23d49" /><path d="M23.500 23h10v36h-10z" fill="#ef9a35" /><path d="M35 9h10v50H35z" fill="#5fce47" /><path d="M46.500 16h10v43h-10z" fill="#3f82ee" />
        </Tile>
        <Tile>
          <Plate fill="#4a3be8" />
          <path d="M24 13h31l-6 12H22l-5 11M24 13l-6 22M22 25h24l-5 12H18M17 36l9 9-6 9-5-8z" fill="none" stroke="#f4f3ff" strokeWidth="3.500" strokeLinejoin="round" />
        </Tile>
        <Tile>
          <Plate fill="url(#pod)" />
          <path d="M24 52a23 23 0 1 1 20 0M27 43a14 14 0 1 1 14 0" fill="none" stroke="#fff" strokeWidth="3.200" strokeLinecap="round" /><circle cx="34" cy="30" r="5.500" fill="#fff" /><path d="M28.500 43q0-5 5.500-5t5.500 5L37.500 57q-.500 3-3.500 3t-3.500-3z" fill="#fff" />
        </Tile>
        <Tile>
          <Plate fill="#fefdf9" />
          <path d="M2 14h64M0 25h68M0 36h68M0 47h68M2 58h64" stroke="#f7d9a2" strokeWidth="1.500" />
          <path d="M5 8h22v18H5z" fill="#fff" stroke="#f7d9a2" /><text x="5" y="42" fontSize="42" fontWeight="800" fill="#ee9a35">“</text>
          <path d="m48 6 6 1.500L34 45l-6-2z" fill="#f0a036" /><path d="m33 32 6.500 2.500L24 62l-4 1 1-4z" fill="#3a3a3c" />
        </Tile>
        <Tile badge="14">
          <Plate fill="url(#store)" />
          <path d="M39 14 20 47M30 14l21 38M12 42h23M44 42h12M18 50l-2 3.500" fill="none" stroke="#fff" strokeWidth="6" strokeLinecap="round" />
        </Tile>
        <Tile badge="1">
          <Plate fill="url(#gray)" />
          <circle cx="34" cy="34" r="27" fill="none" stroke="#3a3c3e" strokeWidth="4" strokeDasharray="2 1.200" /><circle cx="34" cy="34" r="23" fill="#8d9193" stroke="#35373a" strokeWidth="4" />
          <circle cx="34" cy="34" r="18" fill="#55595c" stroke="#c7c9ca" strokeWidth="2.500" /><path d="M34 34h20M34 34 24 17M34 34 24 51" stroke="#c7c9ca" strokeWidth="3" /><circle cx="34" cy="34" r="5" fill="#3c3e41" stroke="#c7c9ca" strokeWidth="2" />
        </Tile>
      </div>
      <i className="ml-[31px] mt-[14px] h-[78px] w-[2px] bg-[#5c3463]" />
      <div className="ml-[27px] flex gap-[20px]">
        <Tile dot="bg-[#2e0826]">
          <Plate fill="#000" />
          <path d="M34 10 55 22v24L34 58 13 46V22z" fill="#6e6e6e" /><path d="M34 10 55 22H13z" fill="#4b4b4b" /><path d="M13 22v24l21-12z" fill="#8d8d8d" /><path d="M13 46 34 58V34z" fill="#a9a9a9" /><path d="M55 22v24L34 58z" fill="#9b9b9b" /><path d="M13 22h42L34 58V34z" fill="#fdfdfd" />
        </Tile>
        <Tile>
          <Plate fill="#f6f7f8" />
          <rect x="5" y="5" width="58" height="58" rx="11" fill="url(#sky)" /><path d="M5 37h58v15q0 11-11 11H16Q5 63 5 52z" fill="#2f4e86" /><path d="M5 50q14-4 28 6v7H16Q5 63 5 52z" fill="#8a7a62" /><path d="M6 47q8 3 16 0M24 54q6-4 12-2" stroke="#fff" strokeWidth="2.500" fill="none" />
          <path d="M36 46h28q1 5 4 12 3 12-2 12H34q-5 0-2-12 3-7 4-12Z" fill="#dfe3e6" stroke="#9aa0a6" /><rect x="35" y="33" width="30" height="14" rx="4" fill="#151617" /><path d="M40 52h8v12h-8zM51 50h9v8h-9z" fill="#8b96a3" />
        </Tile>
        <Tile>
          <Plate fill="#fff" />
          <circle cx="49" cy="34" r="8" fill="#5cab53" /><path d="m44 26-2-4M52 26l2-4" stroke="#5cab53" strokeWidth="1.500" />
          <path d="M13 31q14 16 34 6l3 4Q26 55 11 34Z" fill="#3b7be8" /><path d="M31 18h7l14 38-2 5-4-3-12-28-11 28-5 3-1-5z" fill="#3b7be8" /><path d="M34 7v8" stroke="#1f4f9c" strokeWidth="4" strokeLinecap="round" /><circle cx="34" cy="20" r="5.500" fill="#fff" stroke="#111" strokeWidth="3" />
        </Tile>
      </div>
      <i className="ml-[31px] mt-[14px] h-[78px] w-[2px] bg-[#5c3463]" />
      <svg className="ml-[22px] mt-[27px] h-[64px] w-[80px] overflow-visible" viewBox="0 0 80 64">
        <rect width="80" height="45" fill="#14171c" /><rect width="80" height="4" fill="#eceef0" /><path d="M0 5h80" stroke="#3a3d44" strokeWidth="2" />
        <path d="M2 10h6M4 17h12M4 22h10M4 27h13M4 32h11M4 37h13M4 41h12" stroke="#565d68" strokeWidth="1.500" /><path d="M12 10h6M74 6h4M16 27h3" stroke="#6b5ce0" strokeWidth="2" /><path d="M24 12h8M24 17h4M40 17h5M54 22h20M56 27h16M56 31h12M56 35h15" stroke="#3e454f" strokeWidth="1.500" />
        <g transform="translate(53 35) scale(.37)"><rect width="68" height="68" rx="15.500" fill="#20123a" /><FirefoxArt /></g>
      </svg>
      <svg className="ml-[17px] mt-[8px] h-[82px] w-[61px] overflow-visible" viewBox="0 0 61 82">
        <path d="M2 12h57l-8 62q-1 6-9 6H19q-8 0-9-6z" fill="url(#bin)" />
        <path d="M4 12 12 4l6 4 8-7 7 6 8-5 7 7 8 3-4 7H8z" fill="#f4f4f4" stroke="#8d8d8d" strokeWidth=".800" /><path d="m10 10 6 5 4-7 8 8 6-9 5 8 7-5 5 4-4 5H12z" fill="#4b4f55" /><path d="M18 10h5v4h-5z" fill="#2fb6c2" /><path d="M36 9h5v4h-5z" fill="#d05a3a" />
        <path d="M2 13q28 12 57 0" fill="none" stroke="#fff" strokeWidth="2" /><path d="M12 26l5 44M49 26l-5 44M24 30l3 40M38 34l-2 36" stroke="#fff" strokeWidth="3" opacity=".4" />
      </svg>
    </div>
  );
}

/* ---------- Desktop ---------- */

function Wallpaper() {
  return (
    <svg className="absolute inset-0 h-[1800px] w-[2880px]" viewBox="0 0 2880 1800">
      <defs>
        <linearGradient id="wpL" x1="0" x2="1"><stop stopColor="#2c1738" /><stop offset="1" stopColor="#4f2a72" /></linearGradient>
        <linearGradient id="wpM" x1="0" x2="1"><stop stopColor="#bd7482" /><stop offset="1" stopColor="#c8785c" /></linearGradient>
      </defs>
      <path d="M0 0h2880v1800H0z" fill="#2c0724" />
      <path d="M0 0h2880v100H0z" fill="#869faf" />
      <path d="M0 1600h700v200H0z" fill="url(#wpL)" />
      <path d="M560 1700 456 1800h40l80-60z" fill="#120a18" />
      <path d="M690 1670h1140v130H478l60-60z" fill="url(#wpM)" />
      <path d="M680 1680h1150v4H680z" fill="#75453f" />
      <path d="m980 1790-4 10h3l5-10zM1118 1790l-5 10h3l5-10z" fill="#17444c" />
      <path d="M1800 1790h400v10h-424z" fill="#35144a" />
      <path d="M1860 1790h34l10 10h-36zM2030 1790h34l6 10h-38zM2085 1790h40v10h-38z" fill="#14203f" />
      <path d="M1932 1790h14l6 10h-14zM2020 1790h10l4 10h-12zM2082 1790h10v10h-9z" fill="#3f7477" />
      <path d="M1760 1680h14l2 4h-14zM1896 1680h30l2 4h-30z" fill="#14203f" />
      <path d="M2631 1680h84l43 120h-75z" fill="#d99a72" />
      <path d="m2734 1745 24 55h24z" fill="#6a5580" />
    </svg>
  );
}

export default function App() {
  return (
    <div className="relative h-[1800px] w-[2880px] overflow-hidden font-['Inter',sans-serif]">
      <Wallpaper />
      <Defs />
      <div className="relative flex flex-col">
        <MenuBar />
        <div className="h-[2px] bg-[#718894]" />
        <main className="flex h-[1632px] flex-col overflow-hidden rounded-[20px] bg-[#f9f9f9]">
          <TabStrip />
          <AddressBar />
          <AppBar />
          <div className="flex min-h-0 flex-1">
            <Rail />
            <WidgetPanel />
            <PreviewPanel />
            <div className="flex w-[60px] shrink-0 flex-col items-center border-r-[3px] border-[#dbdbe3] pt-[20px] text-[#a8a8a8]">
              <PanelRight className="size-[27px]" strokeWidth={1.800} />
              <span className="mt-[14px] text-[24px] font-medium [writing-mode:vertical-rl]">Properties</span>
            </div>
            <AgentPanel />
          </div>
          <StatusBar />
        </main>
        <Dock />
      </div>
    </div>
  );
}
